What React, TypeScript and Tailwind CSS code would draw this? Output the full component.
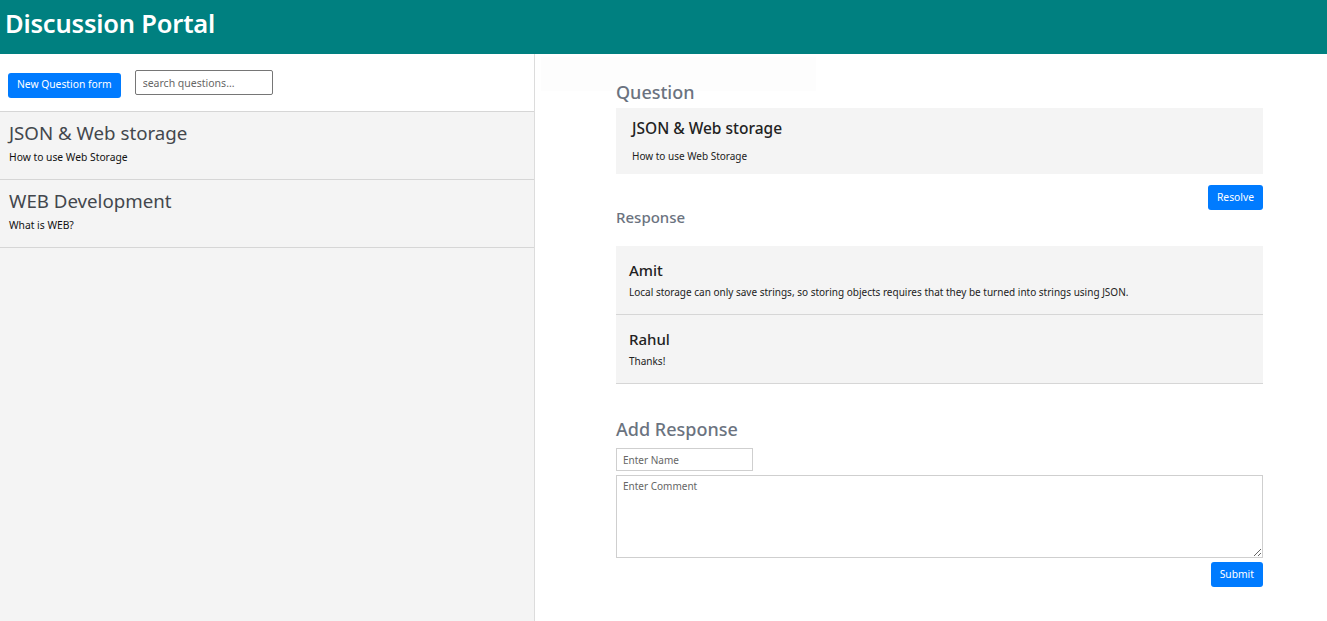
import { useState } from 'react';

type Question = { title: string; body: string };
type Reply = { name: string; comment: string };

const questions: Question[] = [
  { title: 'JSON & Web storage', body: 'How to use Web Storage' },
  { title: 'WEB Development', body: 'What is WEB?' },
];

const replies: Reply[] = [
  {
    name: 'Amit',
    comment: 'Local storage can only save strings, so storing objects requires that they be turned into strings using JSON.',
  },
  { name: 'Rahul', comment: 'Thanks!' },
];

export default function App() {
  const [search, setSearch] = useState('');
  const [name, setName] = useState('');
  const [comment, setComment] = useState('');
  const active = questions[0];

  return (
    <div className="h-[621px] flex flex-col bg-white font-['Noto_Sans',sans-serif] overflow-hidden">
      <header className="h-[54px] shrink-0 bg-[#008080] flex items-center px-[5px] pb-[6px]">
        <h1 className="text-white text-[25.5px] font-semibold leading-none tracking-[-0.2px]">Discussion Portal</h1>
      </header>

      <div className="flex flex-1 min-h-0">
        <aside className="w-[535px] shrink-0 border-r border-[#dcdcdc] bg-[#f4f4f4] flex flex-col">
          <div className="h-[58px] bg-white flex items-center gap-[14px] px-2 border-b border-[#d6d6d6]">
            <button className="h-[25px] px-[9px] mt-[5px] bg-[#007bff] text-white text-[10.3px] rounded-[3px]">
              New Question form
            </button>
            <input
              value={search}
              onChange={(e) => setSearch(e.target.value)}
              placeholder="search questions..."
              className="w-[138px] h-[25px] border border-[#767676] rounded-[2px] px-[7px] text-[10.5px] placeholder:text-[#666] outline-none"
            />
          </div>
          {questions.map((q) => (
            <div key={q.title} className="h-[68px] border-b border-[#d6d6d6] px-[9px] pt-[9px]">
              <div className="text-[18.7px] leading-[24px] text-[#43474d]">{q.title}</div>
              <div className="text-[10.3px] mt-[5px] text-[#111]">{q.body}</div>
            </div>
          ))}
        </aside>

        <main className="flex-1 relative">
          <div className="absolute left-[6px] top-[3px] w-[275px] h-[34px] bg-[#fdfdfd]" />
          <div className="relative ml-[81px] w-[647px] pt-[26px]">
            <h2 className="text-[18px] font-medium text-[#6b7380] leading-[24px]">Question</h2>
            <div className="mt-[4px] bg-[#f4f4f4] h-[66px] px-4 pt-[10px]">
              <div className="text-[15.5px] font-medium text-[#222] leading-[20px]">{active.title}</div>
              <div className="text-[10px] mt-[11px] text-[#222]">{active.body}</div>
            </div>
            <div className="flex justify-end mt-[11px]">
              <button className="h-[25px] px-[9px] bg-[#007bff] text-white text-[10.3px] rounded-[3px]">Resolve</button>
            </div>
            <h3 className="text-[15px] font-medium text-[#6b7380] leading-[20px] -mt-[3px]">Response</h3>
            <div className="mt-[19px] bg-[#f4f4f4]">
              {replies.map((r) => (
                <div key={r.name} className="h-[69px] border-b border-[#d6d6d6] px-[13px] pt-[14px]">
                  <div className="text-[15px] font-medium text-[#222] leading-[20px]">{r.name}</div>
                  <div className="text-[10px] mt-[5px] text-[#222]">{r.comment}</div>
                </div>
              ))}
            </div>
            <h2 className="text-[18px] font-medium text-[#6b7380] leading-[24px] mt-[33px]">Add Response</h2>
            <input
              value={name}
              onChange={(e) => setName(e.target.value)}
              placeholder="Enter Name"
              className="block mt-[7px] w-[137px] h-[23px] border border-[#cfcfcf] px-[6px] text-[10px] placeholder:text-[#666] outline-none"
            />
            <textarea
              value={comment}
              onChange={(e) => setComment(e.target.value)}
              placeholder="Enter Comment"
              className="block mt-[4px] w-[647px] h-[83px] border border-[#cfcfcf] px-[6px] py-[3px] text-[10px] placeholder:text-[#666] outline-none"
            />
            <div className="flex justify-end mt-[4px]">
              <button className="h-[25px] px-[9px] bg-[#007bff] text-white text-[10.3px] rounded-[3px]">Submit</button>
            </div>
          </div>
        </main>
      </div>
    </div>
  );
}
